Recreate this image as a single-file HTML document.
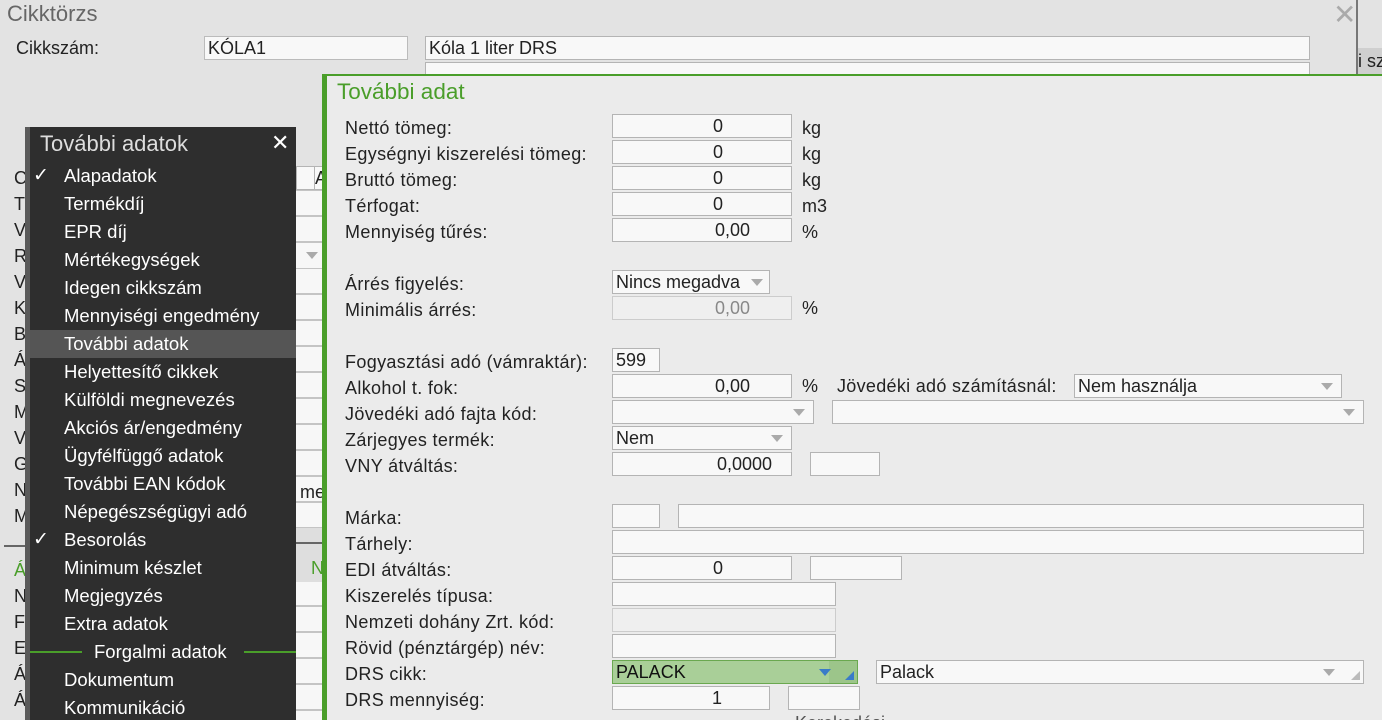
<!DOCTYPE html>
<html><head><meta charset="utf-8">
<style>
*{margin:0;padding:0;box-sizing:border-box}
html{width:1382px;height:720px;overflow:hidden}
body{width:1382px;height:720px;overflow:hidden;background:#e3e3e3;font-family:"Liberation Sans",Arial,sans-serif;color:#222;position:relative}
.a{position:absolute;white-space:nowrap}
.t{font-size:18px;line-height:24px}
.i{position:absolute;background:#f8f8f8;border:1px solid #b4b4b4;height:24px;font-size:18px;line-height:22px;padding:0 3px;white-space:nowrap;overflow:hidden;color:#222}
.r{text-align:right}
.d{background:#efefef;border-color:#ccc;color:#888}
.arr{position:absolute;right:8px;top:8px;width:0;height:0;border-left:6px solid transparent;border-right:6px solid transparent;border-top:7px solid #aaa}
.m{position:absolute;left:64px;font-size:18.5px;color:#fff;line-height:28px}
.ck{position:absolute;left:33px;color:#fff;font-size:19px;line-height:28px}
</style></head><body>
<div class="a" style="left:7px;top:1px;font-size:22px;color:#666">Cikktörzs</div>
<div class="a" style="left:1333px;top:-2px;font-size:28px;color:#aaa">✕</div>
<div class="a t" style="left:16px;top:36px">Cikkszám:</div>
<div class="i" style="left:204px;top:36px;width:204px;border-color:#bbb">KÓLA1</div>
<div class="i" style="left:425px;top:36px;width:885px">Kóla 1 liter DRS</div>
<div class="i" style="left:425px;top:62px;width:885px;height:14px"></div>
<div class="a" style="left:1356px;top:0;width:2px;height:76px;background:#777"></div>
<div class="a" style="left:1358px;top:48px;width:24px;height:26px;background:#cfcfcf;font-size:18px;line-height:26px">i sz</div>
<div class="a t" style="left:14px;top:165px;line-height:26px">C<br>T<br>V<br>R<br>V<br>K<br>B<br>Á<br>S<br>M<br>V<br>G<br>N<br>M</div>
<div class="a" style="left:4px;top:545px;width:22px;height:2px;background:#666"></div>
<div class="a t" style="left:14px;top:557px;line-height:26px"><span style="color:#4a9e2a">Á</span><br>N<br>F<br>E<br>Á<br>Á</div>
<div class="a" style="left:296px;top:166px;width:26px;height:554px;background:#f7f7f7"></div>
<div class="a" style="left:296px;top:166px;width:26px;height:554px;background:repeating-linear-gradient(to bottom,transparent 0,transparent 23px,#c4c4c4 23px,#c4c4c4 25px,transparent 25px,transparent 26px)"></div>
<div class="a" style="left:296px;top:160px;width:26px;height:30px;background:#e3e3e3"></div>
<div class="i" style="left:296px;top:166px;width:20px"></div>
<div class="i" style="left:314px;top:166px;width:12px;padding:0">A</div>
<div class="a" style="left:296px;top:244px;width:26px;height:24px;background:#f7f7f7"><div class="arr" style="right:4px"></div></div>
<div class="a t" style="left:300px;top:480px">me</div>
<div class="a" style="left:296px;top:528px;width:26px;height:54px;background:#dedede"></div>
<div class="a" style="left:296px;top:542px;width:26px;height:2px;background:#666"></div>
<div class="a t" style="left:311px;top:556px;color:#4a9e2a">N</div>
<div class="a" style="left:25px;top:127px;width:271px;height:593px;background:#2e2e2e;border-left:5px solid #5a5a5a"></div>
<div class="a" style="left:40px;top:131px;font-size:22px;color:#ddd">További adatok</div>
<div class="a" style="left:271px;top:130px;font-size:22px;color:#fff">✕</div>
<div class="a" style="left:30px;top:330px;width:266px;height:28px;background:#555"></div>
<div class="ck" style="top:162px">✓</div>
<div class="ck" style="top:526px">✓</div>
<div class="m" style="top:162px">Alapadatok</div>
<div class="m" style="top:190px">Termékdíj</div>
<div class="m" style="top:218px">EPR díj</div>
<div class="m" style="top:246px">Mértékegységek</div>
<div class="m" style="top:274px">Idegen cikkszám</div>
<div class="m" style="top:302px">Mennyiségi engedmény</div>
<div class="m" style="top:330px">További adatok</div>
<div class="m" style="top:358px">Helyettesítő cikkek</div>
<div class="m" style="top:386px">Külföldi megnevezés</div>
<div class="m" style="top:414px">Akciós ár/engedmény</div>
<div class="m" style="top:442px">Ügyfélfüggő adatok</div>
<div class="m" style="top:470px">További EAN kódok</div>
<div class="m" style="top:498px">Népegészségügyi adó</div>
<div class="m" style="top:526px">Besorolás</div>
<div class="m" style="top:554px">Minimum készlet</div>
<div class="m" style="top:582px">Megjegyzés</div>
<div class="m" style="top:610px">Extra adatok</div>
<div class="a" style="left:30px;top:651px;width:52px;height:2px;background:#4a9e2a"></div>
<div class="a" style="left:244px;top:651px;width:52px;height:2px;background:#4a9e2a"></div>
<div class="m" style="top:638px;left:94px">Forgalmi adatok</div>
<div class="m" style="top:666px">Dokumentum</div>
<div class="m" style="top:694px">Kommunikáció</div>
<div class="a" style="left:322px;top:74px;width:1060px;height:646px;background:#ebebeb;border-left:5px solid #4a9e2a;border-top:2px solid #4a9e2a"></div>
<div class="a" style="left:337px;top:79px;font-size:22.5px;color:#4a9e2a">További adat</div>
<div class="a t" style="left:345px;top:115px;line-height:26px;letter-spacing:0.35px">Nettó tömeg:<br>Egységnyi kiszerelési tömeg:<br>Bruttó tömeg:<br>Térfogat:<br>Mennyiség tűrés:<br><br>Árrés figyelés:<br>Minimális árrés:<br><br>Fogyasztási adó (vámraktár):<br>Alkohol t. fok:<br>Jövedéki adó fajta kód:<br>Zárjegyes termék:<br>VNY átváltás:<br><br>Márka:<br>Tárhely:<br>EDI átváltás:<br>Kiszerelés típusa:<br>Nemzeti dohány Zrt. kód:<br>Rövid (pénztárgép) név:<br>DRS cikk:<br>DRS mennyiség:</div>
<div class="i r" style="left:612px;top:114px;width:180px;padding-right:68px">0</div>
<div class="i r" style="left:612px;top:140px;width:180px;padding-right:68px">0</div>
<div class="i r" style="left:612px;top:166px;width:180px;padding-right:68px">0</div>
<div class="i r" style="left:612px;top:192px;width:180px;padding-right:68px">0</div>
<div class="i r" style="left:612px;top:218px;width:180px;padding-right:41px">0,00</div>
<div class="a t" style="left:802px;top:115px;line-height:26px">kg<br>kg<br>kg<br>m3<br>%</div>
<div class="i" style="left:612px;top:270px;width:158px">Nincs megadva<div class="arr" style="right:6px"></div></div>
<div class="i r d" style="left:612px;top:296px;width:180px;padding-right:41px">0,00</div>
<div class="a t" style="left:802px;top:296px">%</div>
<div class="i" style="left:612px;top:348px;width:48px">599</div>
<div class="i r" style="left:612px;top:374px;width:180px;padding-right:41px">0,00</div>
<div class="a t" style="left:802px;top:374px">%</div>
<div class="a t" style="left:837px;top:374px;letter-spacing:0.3px">Jövedéki adó számításnál:</div>
<div class="i" style="left:1074px;top:374px;width:268px">Nem használja<div class="arr"></div></div>
<div class="i" style="left:612px;top:400px;width:202px"><div class="arr"></div></div>
<div class="i" style="left:832px;top:400px;width:532px"><div class="arr"></div></div>
<div class="i" style="left:612px;top:426px;width:180px">Nem<div class="arr"></div></div>
<div class="i r" style="left:612px;top:452px;width:180px;padding-right:19px">0,0000</div>
<div class="i" style="left:810px;top:452px;width:70px"></div>
<div class="i" style="left:612px;top:504px;width:48px"></div>
<div class="i" style="left:678px;top:504px;width:686px"></div>
<div class="i" style="left:612px;top:530px;width:752px"></div>
<div class="i r" style="left:612px;top:556px;width:180px;padding-right:68px">0</div>
<div class="i" style="left:810px;top:556px;width:92px"></div>
<div class="i" style="left:612px;top:582px;width:224px"></div>
<div class="i d" style="left:612px;top:608px;width:224px"></div>
<div class="i" style="left:612px;top:634px;width:224px"></div>
<div class="i" style="left:612px;top:660px;width:246px;background:#a9cf98;border-color:#6aa84f;color:#111">PALACK
 <div class="a" style="right:0;top:0;width:28px;height:22px;background:#9cc58a"></div>
 <div class="arr" style="right:26px;border-top-color:#3a7bc8"></div>
 <div class="a" style="right:3px;top:10px;width:0;height:0;border-left:9px solid transparent;border-bottom:9px solid #3a7bc8"></div></div>
<div class="i" style="left:876px;top:660px;width:488px">Palack<div class="arr" style="right:28px"></div><div class="a" style="right:3px;top:10px;width:0;height:0;border-left:9px solid transparent;border-bottom:9px solid #bbb"></div></div>
<div class="i r" style="left:612px;top:686px;width:158px;padding-right:47px">1</div>
<div class="i" style="left:788px;top:686px;width:72px"></div>
<div class="a" style="left:795px;top:713px;font-size:18px;color:#555">Kerekedési</div>
</body></html>
